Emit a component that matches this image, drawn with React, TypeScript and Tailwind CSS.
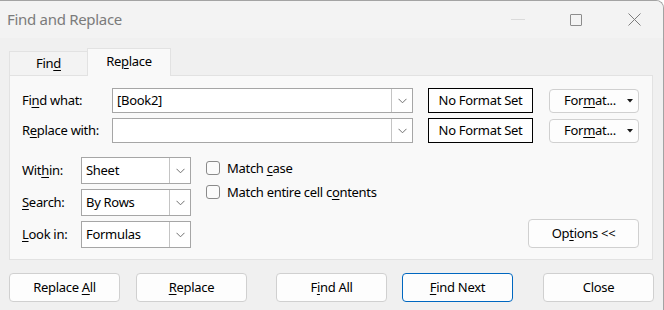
import React from "react";

const U = ({ children }: { children: React.ReactNode }) => (
  <span className="underline decoration-1 underline-offset-[2px]">{children}</span>
);

const Chevron = () => (
  <svg width="9" height="6" viewBox="0 0 9 6" fill="none">
    <path d="M0.5 0.8 L4.5 4.8 L8.5 0.8" stroke="#707070" strokeWidth="1" />
  </svg>
);

const Combo = ({ w, h, text, arrowW }: { w: string; h: string; text?: string; arrowW: string }) => (
  <div className={`flex ${w} ${h} border border-[#a6a6a6] bg-white`}>
    <div className="flex-1 flex items-center pl-[4px] leading-none">{text}</div>
    <div className={`${arrowW} border-l border-[#c4c4c4] flex items-center justify-center`}>
      <Chevron />
    </div>
  </div>
);

const Btn = ({ children, w, cls = "" }: { children: React.ReactNode; w: string; cls?: string }) => (
  <div
    className={`${w} h-[29px] rounded-[4px] bg-[#fdfdfd] border border-[#d0d0d0] flex items-center justify-center ${cls}`}
  >
    <span>{children}</span>
  </div>
);

const Check = ({ children }: { children: React.ReactNode }) => (
  <div className="flex items-center h-[24px]">
    <div className="w-[14px] h-[14px] rounded-[3px] border border-[#8a8a8a] bg-[#fbfbfb]" />
    <span className="ml-[7px]">{children}</span>
  </div>
);

const FormatBtn = () => (
  <div className="ml-[16px] w-[90px] h-[24px] rounded-[4px] bg-[#fdfdfd] border border-[#d0d0d0] flex items-center justify-end pr-[5px]">
    <span>
      For<U>m</U>at...
    </span>
    <svg className="ml-[11px]" width="6" height="4" viewBox="0 0 6 4">
      <path d="M0 0 L6 0 L3 3.5 Z" fill="#1a1a1a" />
    </svg>
  </div>
);

export default function App() {
  return (
    <div className="w-[664px] h-[310px] bg-[#f0f0f0] overflow-hidden border-t border-r border-[#a3a3a3] rounded-tr-[8px] text-[13px] tracking-[-0.3px] text-black font-['Noto_Sans',sans-serif] leading-none">
      {/* title bar */}
      <div className="h-[37px] flex items-center bg-[#f3f3f3]">
        <span className="pl-[7px] text-[15px] text-[#7b7b7b]">Find and Replace</span>
        <div className="ml-auto flex h-full">
          <div className="w-[58px] flex items-center justify-center">
            <div className="w-[14px] h-px bg-[#dadada]" />
          </div>
          <div className="w-[58px] flex items-center justify-center">
            <div className="w-[12px] h-[12px] border border-[#8c8c8c] rounded-[1px]" />
          </div>
          <div className="w-[58px] flex items-center justify-center">
            <svg width="13" height="13" viewBox="0 0 13 13">
              <path d="M0.5 0.5 L12.5 12.5 M12.5 0.5 L0.5 12.5" stroke="#7d7d7d" strokeWidth="1" />
            </svg>
          </div>
        </div>
      </div>

      {/* tabs */}
      <div className="h-[37px] flex items-end pl-[9px]">
        <div className="w-[78px] h-[24px] bg-[#f3f3f3] border-l border-t border-[#e2e2e2] flex items-center justify-center">
          <span>
            Fin<U>d</U>
          </span>
        </div>
        <div className="relative z-10 -mb-px w-[84px] h-[28px] bg-[#f9f9f9] border-l border-t border-r border-[#e2e2e2] flex items-center justify-center pb-[2px]">
          <span>
            Re<U>p</U>lace
          </span>
        </div>
      </div>

      {/* panel */}
      <div className="ml-[9px] w-[644px] h-[185px] bg-[#f9f9f9] border border-[#e2e2e2] pt-[12px] pl-[12px] pr-[13px] flex flex-col">
        <div className="flex items-center h-[25px]">
          <div className="w-[90px]">
            Fi<U>n</U>d what:
          </div>
          <div className="flex w-[301px] h-[25px] border border-[#a6a6a6] bg-white">
            <div className="flex-1 flex items-center pl-[4px]">[Book2]</div>
            <div className="w-[21px] border-l border-[#c4c4c4] flex items-center justify-center">
              <Chevron />
            </div>
          </div>
          <div className="ml-[15px] w-[105px] h-[25px] border border-black bg-white flex items-center justify-center">
            No Format Set
          </div>
          <FormatBtn />
        </div>
        <div className="flex items-center h-[25px] mt-[5px]">
          <div className="w-[90px]">
            R<U>e</U>place with:
          </div>
          <div className="flex w-[301px] h-[25px] border border-[#a6a6a6] bg-white">
            <div className="flex-1" />
            <div className="w-[21px] border-l border-[#c4c4c4] flex items-center justify-center">
              <Chevron />
            </div>
          </div>
          <div className="ml-[15px] w-[105px] h-[25px] border border-black bg-white flex items-center justify-center">
            No Format Set
          </div>
          <FormatBtn />
        </div>

        <div className="flex mt-[14px]">
          <div className="flex flex-col gap-[5px]">
            <div className="flex items-center">
              <div className="w-[59px]">
                Wit<U>h</U>in:
              </div>
              <Combo w="w-[110px]" h="h-[27px]" text="Sheet" arrowW="w-[21px]" />
            </div>
            <div className="flex items-center">
              <div className="w-[59px]">
                <U>S</U>earch:
              </div>
              <Combo w="w-[110px]" h="h-[27px]" text="By Rows" arrowW="w-[21px]" />
            </div>
            <div className="flex items-center">
              <div className="w-[59px]">
                <U>L</U>ook in:
              </div>
              <Combo w="w-[110px]" h="h-[27px]" text="Formulas" arrowW="w-[21px]" />
            </div>
          </div>
          <div className="ml-[15px] -mt-[1px] flex flex-col">
            <Check>
              Match <U>c</U>ase
            </Check>
            <Check>
              Match entire cell c<U>o</U>ntents
            </Check>
          </div>
          <div className="ml-auto self-end">
            <Btn w="w-[111px]">
              Op<U>t</U>ions &lt;&lt;
            </Btn>
          </div>
        </div>
      </div>

      {/* bottom buttons */}
      <div className="flex mt-[13px] pl-[9px]">
        <Btn w="w-[111px]">
          Replace <U>A</U>ll
        </Btn>
        <Btn w="w-[111px]" cls="ml-[16px]">
          <U>R</U>eplace
        </Btn>
        <Btn w="w-[111px]" cls="ml-[29px]">
          F<U>i</U>nd All
        </Btn>
        <Btn w="w-[111px]" cls="ml-[15px] !border-[#0067c0]">
          <U>F</U>ind Next
        </Btn>
        <Btn w="w-[111px]" cls="ml-[30px]">
          Close
        </Btn>
      </div>
    </div>
  );
}
